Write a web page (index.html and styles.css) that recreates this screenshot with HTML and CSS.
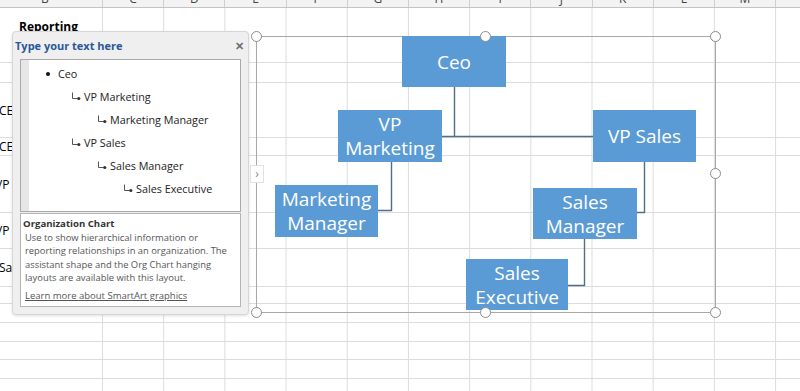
FILE: index.html
```html
<!DOCTYPE html>
<html>
<head>
<meta charset="utf-8">
<link rel="stylesheet" href="styles.css">
</head>
<body>
<div class="sheet">
  <div class="col-head">
    <div class="ch ch-b">B</div>
    <div class="ch">C</div>
    <div class="ch">D</div>
    <div class="ch">E</div>
    <div class="ch">F</div>
    <div class="ch">G</div>
    <div class="ch">H</div>
    <div class="ch">I</div>
    <div class="ch">J</div>
    <div class="ch">K</div>
    <div class="ch">L</div>
    <div class="ch">M</div>
    <div class="ch ch-rest"></div>
  </div>
  <div class="rows">
    <div class="row r1"><span class="cell-text title-cell">Reporting</span></div>
    <div class="row r2"></div>
    <div class="row r3"><span class="cell-text">CEO</span></div>
    <div class="row r4"><span class="cell-text">CEO</span></div>
    <div class="row r5"><span class="cell-text vp">VP Marketing</span></div>
    <div class="row r6"><span class="cell-text vp">VP Sales</span></div>
    <div class="row r7"><span class="cell-text">Sales Manager</span></div>
    <div class="row r8"></div>
    <div class="row r9"></div>
    <div class="row r10"></div>
    <div class="row r11"></div>
    <div class="row r12"></div>
    <div class="row r13"></div>
  </div>
</div>

<div class="pane">
  <div class="pane-head">
    <span class="pane-title">Type your text here</span>
    <span class="pane-close">✕</span>
  </div>
  <div class="pane-list">
    <div class="strip"></div>
    <ul class="items">
      <li class="lvl1"><span class="bullet"></span>Ceo</li>
      <li class="lvl2"><svg class="elbow" viewBox="0 0 10 9" width="10" height="9"><path d="M1.5 0.5V6.5H6.5" fill="none" stroke="#555" stroke-width="1"/><circle cx="7.8" cy="6.5" r="1.6" fill="#333"/></svg>VP Marketing</li>
      <li class="lvl3"><svg class="elbow" viewBox="0 0 10 9" width="10" height="9"><path d="M1.5 0.5V6.5H6.5" fill="none" stroke="#555" stroke-width="1"/><circle cx="7.8" cy="6.5" r="1.6" fill="#333"/></svg>Marketing Manager</li>
      <li class="lvl2"><svg class="elbow" viewBox="0 0 10 9" width="10" height="9"><path d="M1.5 0.5V6.5H6.5" fill="none" stroke="#555" stroke-width="1"/><circle cx="7.8" cy="6.5" r="1.6" fill="#333"/></svg>VP Sales</li>
      <li class="lvl3"><svg class="elbow" viewBox="0 0 10 9" width="10" height="9"><path d="M1.5 0.5V6.5H6.5" fill="none" stroke="#555" stroke-width="1"/><circle cx="7.8" cy="6.5" r="1.6" fill="#333"/></svg>Sales Manager</li>
      <li class="lvl4"><svg class="elbow" viewBox="0 0 10 9" width="10" height="9"><path d="M1.5 0.5V6.5H6.5" fill="none" stroke="#555" stroke-width="1"/><circle cx="7.8" cy="6.5" r="1.6" fill="#333"/></svg>Sales Executive</li>
    </ul>
  </div>
  <div class="pane-desc">
    <div class="desc-title">Organization Chart</div>
    <p class="desc-text">Use to show hierarchical information or<br>reporting relationships in an organization. The<br>assistant shape and the Org Chart hanging<br>layouts are available with this layout.</p>
    <a class="desc-link">Learn more about SmartArt graphics</a>
  </div>
</div>

<div class="frame">
  <svg class="connectors" width="458" height="275" viewBox="0 0 458 275">
    <g fill="none" stroke="#4f6d8c" stroke-width="1.4">
      <path d="M197.5 50V99.5"/>
      <path d="M185 99.5H336"/>
      <path d="M134.5 125V173.5H121"/>
      <path d="M387.5 125V175.5H380"/>
      <path d="M327.5 202V248.5H311"/>
    </g>
  </svg>
  <div class="node n-ceo">Ceo</div>
  <div class="node n-vpm">VP<br>Marketing</div>
  <div class="node n-vps">VP Sales</div>
  <div class="node n-mm">Marketing<br>Manager</div>
  <div class="node n-sm">Sales<br>Manager</div>
  <div class="node n-se">Sales<br>Executive</div>
  <span class="handle h-tl"></span>
  <span class="handle h-tm"></span>
  <span class="handle h-tr"></span>
  <span class="handle h-mr"></span>
  <span class="handle h-br"></span>
  <span class="handle h-bm"></span>
  <span class="handle h-bl"></span>
  <span class="handle h-ml"></span>
</div>
<div class="tab">›</div>
</body>
</html>
```

FILE: styles.css
```css
* { box-sizing: border-box; }
body {
  margin: 0;
  width: 800px;
  height: 391px;
  overflow: hidden;
  position: relative;
  background: #fff;
  font-family: "Open Sans", "Noto Sans", sans-serif;
  color: #000;
}
.sheet { height: 391px; overflow: hidden; }

.col-head {
  display: flex;
  height: 8px;
  background: #f3f3f3;
  border-bottom: 1px solid #c3c3c3;
  overflow: hidden;
}
.ch {
  flex: 0 0 61.2px;
  border-right: 1px solid #cfcfcf;
  font-size: 12px;
  line-height: 12px;
  color: #444;
  text-align: center;
  margin-top: -7px;
  height: 15px;
}
.ch-b { flex-basis: 103px; text-align: left; padding-left: 41px; }
.ch-rest { flex: 1 1 auto; border-right: 0; }

.rows {
  background:
    linear-gradient(#fff, #fff) 0 0 / 102px 100% no-repeat,
    linear-gradient(to right, #dcdcdc 1px, transparent 1px) 102px 0 / 61.2px 100%;
}
.row {
  display: flex;
  align-items: center;
  border-bottom: 1px solid #dcdcdc;
  font-size: 12px;
  white-space: nowrap;
}
.r1 { height: 55px; align-items: flex-start; }
.r2 { height: 20px; }
.r3 { height: 55px; }
.r4 { height: 18px; }
.r5 { height: 57px; }
.r6 { height: 36px; }
.r7 { height: 38px; }
.r8 { height: 17px; }
.r9 { height: 19px; }
.r10 { height: 19px; }
.r11 { height: 18px; }
.r12 { height: 19px; }
.r13 { height: 19px; }
.cell-text { margin-left: -1px; }
.cell-text.vp { margin-left: -5px; }
.title-cell { font-weight: 700; margin-left: 19px; margin-top: 10px; font-size: 12px; }

/* text pane */
.pane {
  position: absolute;
  left: 12px;
  top: 31px;
  width: 237px;
  height: 284px;
  background: #efefef;
  border: 1px solid #d6d6d6;
  border-radius: 4px;
  padding: 0 7px 7px 7px;
  display: flex;
  flex-direction: column;
  box-shadow: 0 1px 3px rgba(0,0,0,0.12);
  z-index: 3;
}
.pane-head {
  height: 27px;
  display: flex;
  align-items: center;
  justify-content: space-between;
  margin: 0 -3px 0 -5px;
}
.pane-title {
  font-size: 11px;
  font-weight: 700;
  color: #2b5797;
}
.pane-close {
  font-size: 11px;
  font-weight: 700;
  color: #6e6e6e;
}
.pane-list {
  height: 153px;
  background: #fff;
  border: 1px solid #a9a9a9;
  display: flex;
}
.strip { width: 8px; background: #e6e6e6; }
.items {
  list-style: none;
  margin: 0;
  padding: 2px 0 0 0;
  flex: 1;
}
.items li {
  display: flex;
  align-items: center;
  height: 23px;
  font-size: 10.8px;
  color: #222;
  white-space: nowrap;
}
.bullet {
  width: 4px;
  height: 4px;
  border-radius: 50%;
  background: #111;
  margin-right: 8px;
}
.elbow { margin-right: 3px; flex: none; }
.lvl1 { padding-left: 17px; }
.lvl2 { padding-left: 42px; }
.lvl3 { padding-left: 68px; }
.lvl4 { padding-left: 94px; }

.pane-desc {
  margin-top: 1px;
  height: 94px;
  background: #fff;
  border: 1px solid #b4b4b4;
  padding: 3px 0 0 2px;
}
.desc-title {
  font-size: 9.6px;
  font-weight: 700;
  color: #333;
  line-height: 14px;
}
.desc-text {
  margin: 0;
  padding-left: 2px;
  font-size: 9.4px;
  line-height: 13.3px;
  color: #555;
  white-space: nowrap;
}
.desc-link {
  display: block;
  margin-top: 5px;
  padding-left: 2px;
  font-size: 9.5px;
  line-height: 13px;
  color: #555;
  text-decoration: underline;
}

/* smartart frame */
.frame {
  position: absolute;
  left: 256px;
  top: 36px;
  width: 460px;
  height: 277px;
  border: 1px solid #a8a8a8;
  z-index: 2;
}
.connectors { position: absolute; left: 0; top: 0; overflow: visible; }
.node {
  position: absolute;
  background: #5b9bd5;
  color: #fff;
  font-size: 19px;
  line-height: 24px;
  display: flex;
  align-items: center;
  justify-content: center;
  text-align: center;
}
.n-ceo { left: 145px; top: -1px; width: 104px; height: 51px; }
.n-vpm { left: 81px; top: 73px; width: 104px; height: 52px; }
.n-vps { left: 336px; top: 73px; width: 103px; height: 52px; }
.n-mm { left: 18px; top: 148px; width: 103px; height: 52px; }
.n-sm { left: 276px; top: 151px; width: 104px; height: 51px; }
.n-se { left: 209px; top: 222px; width: 102px; height: 51px; }

.handle {
  position: absolute;
  width: 11px;
  height: 11px;
  border-radius: 50%;
  background: #fff;
  border: 1.5px solid #8c8c8c;
}
.h-tl { left: -6px; top: -6px; }
.h-tm { left: 223px; top: -6px; }
.h-tr { left: 453px; top: -6px; }
.h-mr { left: 453px; top: 131px; }
.h-br { left: 453px; top: 270px; }
.h-bm { left: 223px; top: 270px; }
.h-bl { left: -6px; top: 270px; }
.h-ml { left: -6px; top: 131px; }

.tab {
  position: absolute;
  left: 250px;
  top: 165px;
  width: 14px;
  height: 18px;
  background: #fff;
  border: 1px solid #e2e2e2;
  color: #8a8a8a;
  font-size: 12px;
  line-height: 15px;
  text-align: center;
  z-index: 4;
}
```
